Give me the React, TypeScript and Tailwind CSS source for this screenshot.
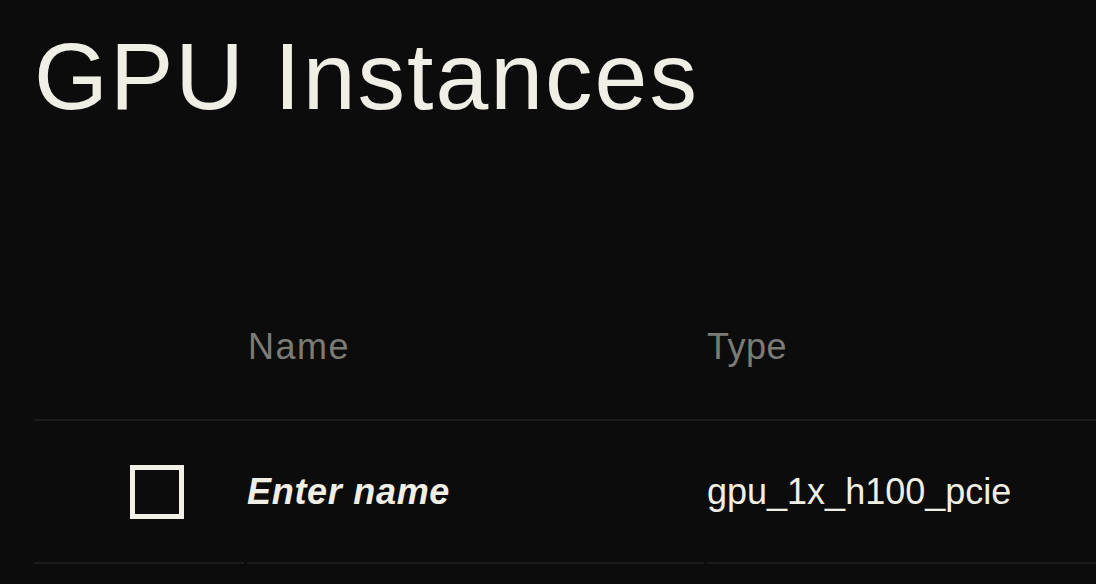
export default function App() {
  return (
    <div
      className="w-[1096px] h-[584px] overflow-hidden bg-[#0c0c0c] text-[#f0efe6]"
      style={{ fontFamily: '"Liberation Sans", Arial, sans-serif' }}
    >
      <div className="pl-[34px] pt-[29px]">
        <h1 className="text-[95px] leading-none font-normal tracking-[2px]">GPU Instances</h1>

        {/* table header */}
        <div className="mt-[205px] grid grid-cols-[210px_457px_1fr] gap-x-[3px] border-b-2 border-[#1c1c1c] pb-[54px] text-[36px] leading-none text-[#7c7c76]">
          <div />
          <div className="pl-px tracking-[1.5px]">Name</div>
          <div className="tracking-[0.5px]">Type</div>
        </div>

        {/* table row */}
        <div className="grid grid-cols-[210px_457px_1fr] gap-x-[3px] text-[36px] leading-none">
          <div className="h-[143px] flex items-center pl-[96px] border-b-2 border-[#1c1c1c]">
            <div className="w-[54px] h-[54px] border-[5px] border-[#f2f1e8]" />
          </div>
          <div className="h-[143px] flex items-center border-b-2 border-[#1c1c1c]">
            <span className="font-bold italic tracking-[0.7px]">Enter name</span>
          </div>
          <div className="h-[143px] flex items-center border-b-2 border-[#1c1c1c]">
            gpu_1x_h100_pcie
          </div>
        </div>
      </div>
    </div>
  );
}
